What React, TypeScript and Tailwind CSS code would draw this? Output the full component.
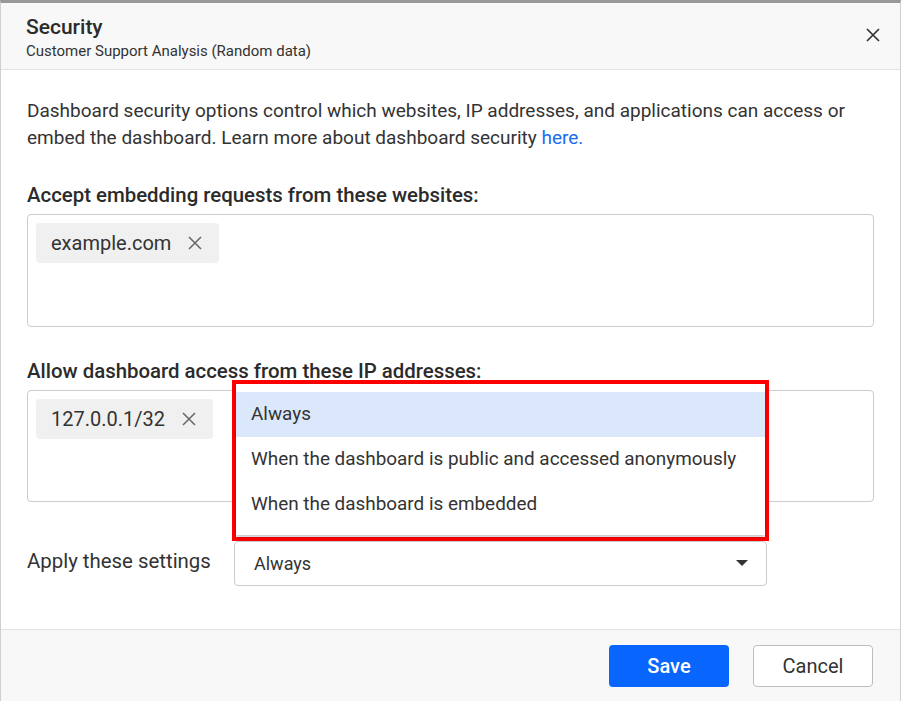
const font = { fontFamily: "Roboto, 'Liberation Sans', sans-serif" };

function Cross({ size, color, stroke }: { size: number; color: string; stroke: number }) {
  return (
    <svg width={size} height={size} viewBox={`0 0 ${size} ${size}`} fill="none">
      <path d={`M1 1L${size - 1} ${size - 1}M${size - 1} 1L1 ${size - 1}`} stroke={color} strokeWidth={stroke} />
    </svg>
  );
}

function Chip({ label }: { label: string }) {
  return (
    <div className="inline-flex h-[40px] items-center gap-[17px] rounded-[4px] bg-[#f0f0f0] pl-[15px] pr-[17px] text-[20px] text-[#333]">
      <span>{label}</span>
      <Cross size={14} color="#666" stroke={1.5} />
    </div>
  );
}

const options = [
  "Always",
  "When the dashboard is public and accessed anonymously",
  "When the dashboard is embedded",
];

export default function App() {
  return (
    <div
      className="relative flex h-[701px] w-[901px] flex-col border-x border-t-[3px] border-x-[#cfcfcf] border-t-[#999] bg-white text-[#333]"
      style={font}
    >
      {/* header */}
      <div className="flex h-[67px] items-start justify-between border-b border-[#e3e3e3] bg-[#f8f8f8] pl-[25px] pr-[20px]">
        <div className="pt-[11px]">
          <div className="text-[21px] font-medium leading-[26px] text-[#2b2b2b]">Security</div>
          <div className="mt-[2px] text-[15px] leading-[18px] text-[#333]">
            Customer Support Analysis (Random data)
          </div>
        </div>
        <div className="mt-[25px]">
          <Cross size={14} color="#333" stroke={1.7} />
        </div>
      </div>

      {/* body */}
      <div className="flex-1 px-[26px] pt-[27px]">
        <p className="text-[19px] leading-[27px] text-[#333]">
          Dashboard security options control which websites, IP addresses, and applications can access or
          embed the dashboard. Learn more about dashboard security <span className="text-[#1a6cf0]">here.</span>
        </p>

        <div className="mt-[32px] text-[20.4px] font-medium leading-[24px] text-[#2b2b2b]">
          Accept embedding requests from these websites:
        </div>
        <div className="mt-[7px] h-[113px] rounded-[4px] border border-[#cccccc] p-[8px]">
          <Chip label="example.com" />
        </div>

        <div className="mt-[32px] text-[20.4px] font-medium leading-[24px] text-[#2b2b2b]">
          Allow dashboard access from these IP addresses:
        </div>
        <div className="mt-[7px] h-[112px] rounded-[4px] border border-[#cccccc] p-[8px]">
          <Chip label="127.0.0.1/32" />
        </div>

        <div className="mt-[39px] flex items-center">
          <div className="mb-[5px] w-[207px] text-[20.4px] leading-[24px] text-[#333]">Apply these settings</div>
          <div className="flex h-[45px] w-[533px] items-center justify-between rounded-[4px] border border-[#cccccc] pb-[1px] pl-[19px] pr-[18px] text-[18px] text-[#333]">
            <span>Always</span>
            <svg width="12" height="6" viewBox="0 0 12 6">
              <path d="M0 0h12L6 6z" fill="#333" />
            </svg>
          </div>
        </div>
      </div>

      {/* footer */}
      <div className="flex h-[72px] items-start justify-end gap-[24px] border-t border-[#e3e3e3] bg-[#f8f8f8] pr-[27px] pt-[15px]">
        <button className="h-[42px] w-[120px] rounded-[4px] bg-[#0866ff] text-[20px] font-medium text-white">
          Save
        </button>
        <button className="h-[42px] w-[120px] rounded-[4px] border border-[#bdbdbd] bg-white text-[20px] text-[#333]">
          Cancel
        </button>
      </div>

      {/* dropdown menu, highlighted */}
      <div className="absolute left-[231px] top-[377px] h-[161px] w-[537px] border-[4px] border-[#ff0000]">
        <div className="h-[151px] bg-white py-[8px] shadow-[0_2px_4px_rgba(0,0,0,0.25)]">
          {options.map((o, i) => (
            <div
              key={o}
              className={`flex h-[45px] items-center pl-[15px] text-[18.9px] text-[#333] ${
                i === 0 ? "bg-[#dbe8fc]" : ""
              }`}
            >
              {o}
            </div>
          ))}
        </div>
      </div>
    </div>
  );
}
